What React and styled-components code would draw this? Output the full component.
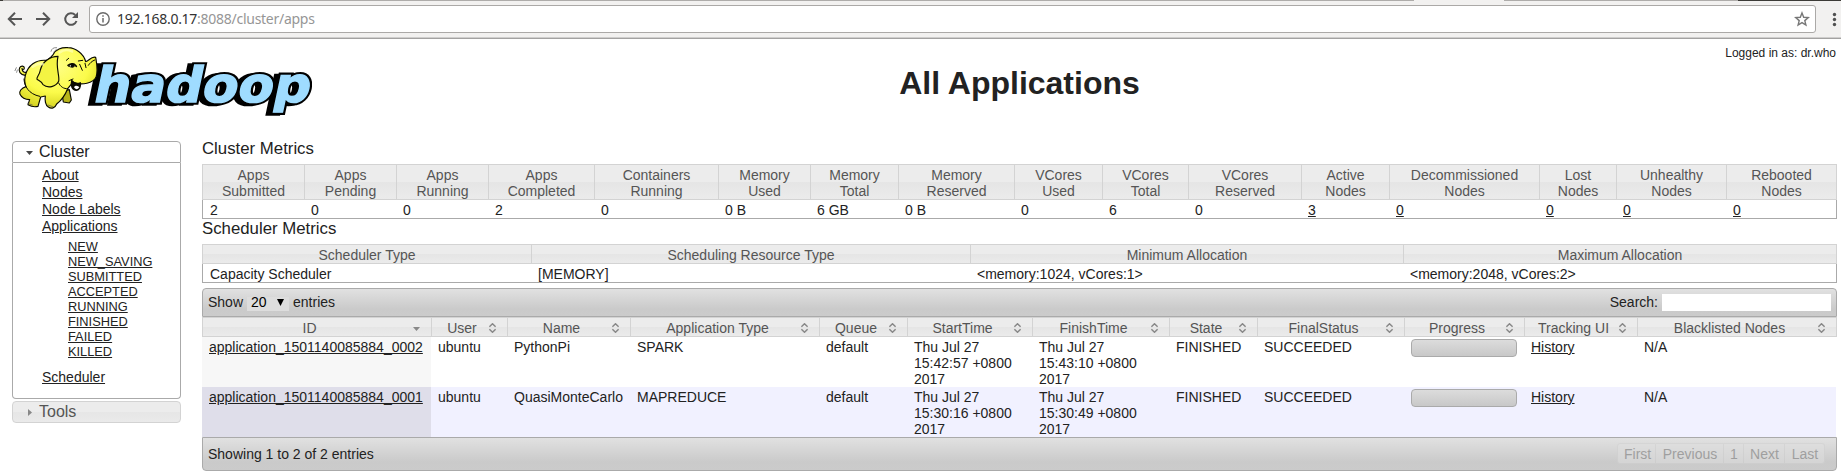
import React from 'react';
import styled, { createGlobalStyle } from 'styled-components';

const GlobalStyle = createGlobalStyle`
  html, body { margin: 0; padding: 0; background: #fff; }
  body {
    font-family: "Liberation Sans", Arial, sans-serif;
    font-size: 14px;
    line-height: 16px;
    color: #222;
    overflow: hidden;
  }
  * { box-sizing: border-box; }
`;

const Page = styled.div`
  width: 1841px;
  height: 475px;
  display: flex;
  flex-direction: column;
`;

/* Browser chrome */
const TabStrip = styled.div`
  display: flex;
  height: 1px;
  flex: none;
`;
const TabEdge = styled.div`
  width: ${(p) => p.$width}px;
  background: ${(p) => p.$tone};
`;
const Toolbar = styled.div`
  height: 38px;
  flex: none;
  display: flex;
  align-items: flex-start;
  padding: 4px 0 0 6px;
  background: #f2f1f0;
  border-bottom: 1px solid #a3a2a1;
  box-shadow: inset 0 -1px 0 #cfcecd;
`;
const NavIcons = styled.div`
  display: flex;
  width: 83px;
  padding-top: 4px;
  gap: 8px;
`;
const AddressBar = styled.div`
  display: flex;
  align-items: center;
  width: 1727px;
  height: 28px;
  padding: 0 5px 0 5px;
  background: #fff;
  border: 1px solid #aba9a7;
  border-radius: 3px;
`;
const Url = styled.div`
  flex: 1;
  margin-left: 6px;
  font-family: "Noto Sans", "Open Sans", sans-serif;
  font-size: 14px;
  letter-spacing: -0.27px;
  color: #333;
  white-space: nowrap;
  span { color: #969696; }
`;
const MenuIcon = styled.svg`
  margin: 6px 0 0 14px;
  flex: none;
`;

/* Page header */
const Header = styled.header`
  display: grid;
  grid-template-columns: 312px 1fr 114px;
  height: 101px;
  flex: none;
`;
const Logo = styled.svg`
  margin: 5px 0 0 12px;
  display: block;
`;
const Title = styled.h1`
  margin: 26px 0 0;
  font-size: 32px;
  line-height: 36px;
  font-weight: bold;
  text-align: center;
`;
const Login = styled.div`
  justify-self: end;
  padding: 7px 5px 0 0;
  font-size: 12px;
  line-height: 14px;
  white-space: nowrap;
`;

const Body = styled.div`
  display: flex;
  align-items: flex-start;
`;

/* Sidebar */
const Sidebar = styled.nav`
  width: 202px;
  flex: none;
  padding: 1px 21px 0 12px;
`;
const AccordionHeader = styled.div`
  display: flex;
  align-items: center;
  height: 22px;
  padding-left: 13px;
  font-size: 16px;
  line-height: 18px;
  color: ${(p) => (p.$open ? '#212121' : '#555')};
  background: ${(p) =>
    p.$open ? '#fff' : 'linear-gradient(#ececec 0, #ececec 50%, #e6e6e6 50%, #eaeaea 100%)'};
  border: 1px solid ${(p) => (p.$open ? '#aaa' : '#d3d3d3')};
  border-radius: ${(p) => (p.$open ? '4px 4px 0 0' : '4px')};
  margin-top: ${(p) => (p.$open ? 0 : 2)}px;
  svg { margin-right: 6px; }
`;
const AccordionBody = styled.div`
  height: 236px;
  padding: 4px 0 0 29px;
  border: 1px solid #aaa;
  border-top: 0;
  border-radius: 0 0 4px 4px;
`;
const MenuList = styled.ul`
  list-style: none;
  margin: 0;
  padding: 0;
  line-height: 17px;
`;
const StateList = styled.ul`
  list-style: none;
  margin: 4px 0 10px;
  padding: 0 0 0 26px;
  font-size: 12.8px;
  line-height: 15px;
`;
const Link = styled.a`
  color: #222;
  text-decoration: underline;
`;

/* Content */
const Main = styled.main`
  width: 1635px;
`;
const SectionTitle = styled.div`
  height: ${(p) => p.$height}px;
  padding-top: ${(p) => p.$offset}px;
  font-size: 16.8px;
  line-height: 18px;
`;
const Grid = styled.div`
  display: grid;
  grid-template-columns: ${(p) => p.$columns};
`;
const HeadGrid = styled(Grid)`
  border-right: 1px solid #d3d3d3;
`;
const HeadCell = styled.div`
  border: 1px solid #d3d3d3;
  border-right: 0;
  padding: 2px ${(p) => (p.$sortable ? 15 : 0)}px 0 0;
  color: #555;
  text-align: center;
  white-space: pre-line;
  background: linear-gradient(#ececec 0, #ececec 50%, #e5e5e5 50%, #ebebeb 100%);
  position: relative;
`;
const SortIcon = styled.svg`
  position: absolute;
  right: 10px;
  top: 5px;
`;
const MetricsRow = styled(Grid)`
  height: 19px;
  border: 1px solid #aaa;
  border-top: 0;
`;
const MetricsCell = styled.div`
  padding: 2px 0 0 7px;
  line-height: 16px;
`;

const AppsTable = styled.section`
  margin-top: 5px;
`;
const Bar = styled.div`
  display: flex;
  justify-content: space-between;
  height: ${(p) => p.$height}px;
  padding: ${(p) => p.$pad};
  border: 1px solid #aaa;
  border-radius: ${(p) => p.$radius};
  background: linear-gradient(#e1e1e1 0, #cacaca 75%, #cbcbcb 100%);
`;
const BarText = styled.div`
  display: flex;
  padding-top: ${(p) => p.$offset || 0}px;
  white-space: pre;
`;
const LengthSelect = styled.span`
  display: flex;
  align-items: flex-start;
  justify-content: space-between;
  width: 42px;
  height: 14px;
  margin: 3px 4px 0 4px;
  padding: 0 5px 0 4px;
  line-height: 10px;
  background: #ddd;
  color: #000;
  svg { margin-top: 2px; }
`;
const SearchInput = styled.input`
  width: 169px;
  height: 17px;
  margin: 0 0 0 4px;
  padding: 0;
  border: 0;
  background: #fff;
`;
const AppRow = styled(Grid)`
  height: 50px;
  padding-right: 1px;
  background: ${(p) => (p.$even ? '#f1f1ff' : '#fff')};
  background-clip: content-box;
`;
const AppCell = styled.div`
  padding: 2px 0 0 7px;
  white-space: pre-line;
  background: ${(p) => p.$tone || 'transparent'};
`;
const Progress = styled.div`
  width: 106px;
  height: 18px;
  border: 1px solid #aaa;
  border-radius: 4px;
  background: linear-gradient(#dcdcdc, #c8c8c8);
`;
const Pager = styled.div`
  display: flex;
  height: 21px;
  opacity: 0.5;
`;
const PageButton = styled.span`
  padding: 2px 5px 0 6px;
  border: 1px solid #d0d0d0;
  border-left-width: ${(p) => (p.$first ? 1 : 0)}px;
  background: #e0e0e0;
  color: #6e6e6e;
  width: ${(p) => p.$width}px;
  text-align: center;
  white-space: nowrap;
  border-radius: ${(p) => (p.$first ? '3px 0 0 3px' : p.$last ? '0 3px 3px 0' : 0)};
`;

const clusterMetrics = [
  ['Apps\nSubmitted', '2', 102],
  ['Apps\nPending', '0', 92],
  ['Apps\nRunning', '0', 92],
  ['Apps\nCompleted', '2', 106],
  ['Containers\nRunning', '0', 124],
  ['Memory\nUsed', '0 B', 92],
  ['Memory\nTotal', '6 GB', 88],
  ['Memory\nReserved', '0 B', 116],
  ['VCores\nUsed', '0', 88],
  ['VCores\nTotal', '6', 86],
  ['VCores\nReserved', '0', 113],
  ['Active\nNodes', '3', 88, true],
  ['Decommissioned\nNodes', '0', 150, true],
  ['Lost\nNodes', '0', 77, true],
  ['Unhealthy\nNodes', '0', 110, true],
  ['Rebooted\nNodes', '0', 111, true],
];

const schedulerMetrics = [
  ['Scheduler Type', 'Capacity Scheduler', 329],
  ['Scheduling Resource Type', '[MEMORY]', 439],
  ['Minimum Allocation', '<memory:1024, vCores:1>', 433],
  ['Maximum Allocation', '<memory:2048, vCores:2>', 434],
];

const appColumns = [
  ['ID', 229], ['User', 76], ['Name', 123], ['Application Type', 189], ['Queue', 88],
  ['StartTime', 125], ['FinishTime', 137], ['State', 88], ['FinalStatus', 147],
  ['Progress', 120], ['Tracking UI', 113], ['Blacklisted Nodes', 200],
];

const apps = [
  {
    id: 'application_1501140085884_0002', name: 'PythonPi', type: 'SPARK',
    start: 'Thu Jul 27\n15:42:57 +0800\n2017', finish: 'Thu Jul 27\n15:43:10 +0800\n2017',
  },
  {
    id: 'application_1501140085884_0001', name: 'QuasiMonteCarlo', type: 'MAPREDUCE',
    start: 'Thu Jul 27\n15:30:16 +0800\n2017', finish: 'Thu Jul 27\n15:30:49 +0800\n2017',
  },
];

const states = ['NEW', 'NEW_SAVING', 'SUBMITTED', 'ACCEPTED', 'RUNNING', 'FINISHED', 'FAILED', 'KILLED'];

/* The final column takes whatever width is left. */
const template = (widths) =>
  widths.map((w, i) => (i === widths.length - 1 ? 'minmax(0, 1fr)' : `${w}px`)).join(' ');

function MetricsTable({ metrics }) {
  const widths = metrics.map((m) => m[2]);
  /* The value row has its own left border, taken out of its first column. */
  const rowWidths = [widths[0] - 1, ...widths.slice(1)];
  return (
    <div>
      <HeadGrid $columns={template(widths)}>
        {metrics.map(([label]) => <HeadCell key={label}>{label}</HeadCell>)}
      </HeadGrid>
      <MetricsRow $columns={template(rowWidths)}>
        {metrics.map(([label, value, , linked]) => (
          <MetricsCell key={label}>{linked ? <Link>{value}</Link> : value}</MetricsCell>
        ))}
      </MetricsRow>
    </div>
  );
}

function HadoopLogo() {
  return (
    <Logo width="300" height="76" viewBox="36 132 900 228">
      <defs>
        <radialGradient id="skin" cx="0.45" cy="0.3" r="0.8">
          <stop offset="0" stopColor="#ffff8a" />
          <stop offset="0.55" stopColor="#fbfb4a" />
          <stop offset="1" stopColor="#c9c614" />
        </radialGradient>
      </defs>
      <g
        transform="translate(283 306) skewX(-12)"
        fontFamily="DejaVu Sans"
        fontWeight="bold"
        fontSize="146"
        strokeLinejoin="miter"
      >
        <text x="-22" y="3" textLength="650" lengthAdjust="spacingAndGlyphs" fill="#000" stroke="#000" strokeWidth="16">hadoop</text>
        <text x="-8" y="0" textLength="650" lengthAdjust="spacingAndGlyphs" fill="#000" stroke="#000" strokeWidth="17">hadoop</text>
        <text x="-8" y="0" textLength="650" lengthAdjust="spacingAndGlyphs" fill="#9fdcff" stroke="#9fdcff" strokeWidth="4">hadoop</text>
      </g>
      <g fill="url(#skin)" stroke="#0a0a00" strokeWidth="3.5" strokeLinejoin="round" strokeLinecap="round">
        <path d="M76 226C61 225 54 213 59 203C63 196 73 197 73 204C73 210 65 210 66 205C66 214 73 220 80 216" />
        <path d="M187 288L190 306L208 309L214 300L208 269L190 272Z" fill="#b8b51a" />
        <path d="M78 260C64 264 56 275 60 283C65 293 77 299 89 299L84 314C94 320 106 321 114 319L122 291L136 288C134 300 136 316 145 321C154 327 165 325 170 312C184 301 197 281 203 266L218 248C248 257 279 249 288 232C295 212 290 190 287 172C273 168 267 184 257 185C251 160 227 144 204 143C185 141 166 149 160 163C151 174 145 181 137 181C108 179 84 196 76 226C73 239 74 251 78 260Z" />
        <path d="M174 169C151 169 127 184 121 210C119 225 108 233 111 238C119 243 126 245 129 254C144 267 168 260 176 244C180 228 166 203 174 169Z" fill="#f4f443" />
        <path d="M215 241C211 257 216 271 229 271C238 270 244 260 241 248C231 253 222 249 215 241Z" fill="#0a0a00" />
        <path d="M222 261C227 254 235 257 238 262C232 270 226 269 222 261Z" fill="#fff" stroke="none" />
        <path d="M72 237C73 258 85 282 119 289M203 266C191 267 181 260 176 249M284 180C276 183 269 190 265 196M199 181L206 175M235 183L248 181M239 193L247 211M255 190L258 203M207 242L219 237" fill="none" strokeWidth="3" />
        <path d="M207 199C210 191 220 188 226 195C225 201 215 204 207 199Z" fill="#fff" strokeWidth="2.5" />
        <path d="M204 196C213 189 222 190 229 199" fill="none" strokeWidth="5" />
        <circle cx="217" cy="197" r="3.5" fill="#0a0a00" />
        <path d="M153 154C155 146 160 142 170 143M161 157C164 151 168 149 173 149M45 212L49 203M50 217L52 210M83 310L97 315M144 315L158 320" fill="none" stroke="#555" strokeWidth="2" />
        <path d="M179 157C190 149 205 149 216 154M98 200C111 191 122 190 129 193" fill="none" stroke="#ffffb8" strokeWidth="8" opacity="0.7" />
      </g>
    </Logo>
  );
}

function SortArrows({ active }) {
  return active ? (
    <SortIcon width="9" height="10" viewBox="0 0 9 10">
      <path d="M1 4H8L4.5 8Z" fill="#888" />
    </SortIcon>
  ) : (
    <SortIcon width="9" height="10" viewBox="0 0 9 10">
      <path d="M1.4 3.8L4.5 0.8L7.6 3.8M1.4 6.2L4.5 9.2L7.6 6.2" fill="none" stroke="#888" strokeWidth="1.5" />
    </SortIcon>
  );
}

function BrowserChrome() {
  return (
    <>
      <TabStrip>
        <TabEdge $width={3} $tone="#3c3b37" />
        <TabEdge $width={1411} $tone="#aeacaa" />
        <TabEdge $width={90} $tone="#f2f1f0" />
        <TabEdge $width={234} $tone="#aeacaa" />
        <TabEdge $width={103} $tone="#3c3b37" />
      </TabStrip>
      <Toolbar>
        <NavIcons>
          <svg width="20" height="20" viewBox="0 0 20 20" fill="none" stroke="#555" strokeWidth="2">
            <path d="M16 10H3.5M9 3.8L2.8 10L9 16.2" />
          </svg>
          <svg width="20" height="20" viewBox="0 0 20 20" fill="none" stroke="#555" strokeWidth="2">
            <path d="M2 10H14.5M9 3.8L15.2 10L9 16.2" />
          </svg>
          <svg width="20" height="20" viewBox="0 0 20 20">
            <path d="M14.5 12A5.8 5.8 0 1 1 13.2 6" fill="none" stroke="#555" strokeWidth="2" />
            <path d="M16 3V9H10Z" fill="#555" />
          </svg>
        </NavIcons>
        <AddressBar>
          <svg width="16" height="16" viewBox="0 0 16 16">
            <circle cx="8" cy="8" r="6.2" fill="none" stroke="#6b6b6b" strokeWidth="1.4" />
            <path d="M8 7V11.5M8 4.2V5.8" stroke="#6b6b6b" strokeWidth="1.5" />
          </svg>
          <Url>192.168.0.17<span>:8088/cluster/apps</span></Url>
          <svg width="16" height="16" viewBox="0 0 16 16">
            <path d="M8 2L9.7 6.3L14.3 6.6L10.8 9.6L11.9 14L8 11.6L4.1 14L5.2 9.6L1.7 6.6L6.3 6.3Z" fill="none" stroke="#777" strokeWidth="1.4" />
          </svg>
        </AddressBar>
        <MenuIcon width="8" height="16" viewBox="0 0 8 16" fill="#505050">
          <circle cx="4.5" cy="3.5" r="1.7" />
          <circle cx="4.5" cy="8.5" r="1.7" />
          <circle cx="4.5" cy="13.5" r="1.7" />
        </MenuIcon>
      </Toolbar>
    </>
  );
}

export default function App() {
  const appTemplate = template(appColumns.map((c) => c[1]));
  return (
    <Page>
      <GlobalStyle />
      <BrowserChrome />
      <Header>
        <HadoopLogo />
        <Title>All Applications</Title>
        <Login>Logged in as: dr.who</Login>
      </Header>
      <Body>
        <Sidebar>
          <AccordionHeader $open>
            <svg width="7" height="7" viewBox="0 0 7 7"><path d="M0 2H7L3.5 6Z" fill="#454545" /></svg>
            Cluster
          </AccordionHeader>
          <AccordionBody>
            <MenuList>
              <li><Link>About</Link></li>
              <li><Link>Nodes</Link></li>
              <li><Link>Node Labels</Link></li>
              <li>
                <Link>Applications</Link>
                <StateList>
                  {states.map((s) => <li key={s}><Link>{s}</Link></li>)}
                </StateList>
              </li>
              <li><Link>Scheduler</Link></li>
            </MenuList>
          </AccordionBody>
          <AccordionHeader>
            <svg width="7" height="7" viewBox="0 0 7 7"><path d="M2 0V7L6 3.5Z" fill="#888" /></svg>
            Tools
          </AccordionHeader>
        </Sidebar>
        <Main>
          <SectionTitle $height={24} $offset={0}>Cluster Metrics</SectionTitle>
          <MetricsTable metrics={clusterMetrics} />
          <SectionTitle $height={25} $offset={1}>Scheduler Metrics</SectionTitle>
          <MetricsTable metrics={schedulerMetrics} />
          <AppsTable>
            <Bar $height={29} $pad="5px 5px 0" $radius="4px 4px 0 0">
              <BarText>Show<LengthSelect>20
                <svg width="7" height="7" viewBox="0 0 7 7"><path d="M0 0H7L3.5 7Z" fill="#000" /></svg>
              </LengthSelect>entries</BarText>
              <BarText>Search:<SearchInput aria-label="Search" /></BarText>
            </Bar>
            <HeadGrid $columns={appTemplate}>
              {appColumns.map(([label], i) => (
                <HeadCell key={label} $sortable>
                  {label}
                  <SortArrows active={i === 0} />
                </HeadCell>
              ))}
            </HeadGrid>
            {apps.map((app, i) => (
              <AppRow key={app.id} $columns={appTemplate} $even={i === 1}>
                <AppCell $tone={i ? '#dfdeea' : '#f7f7f7'}><Link>{app.id}</Link></AppCell>
                <AppCell>ubuntu</AppCell>
                <AppCell>{app.name}</AppCell>
                <AppCell>{app.type}</AppCell>
                <AppCell>default</AppCell>
                <AppCell>{app.start}</AppCell>
                <AppCell>{app.finish}</AppCell>
                <AppCell>FINISHED</AppCell>
                <AppCell>SUCCEEDED</AppCell>
                <AppCell><Progress /></AppCell>
                <AppCell><Link>History</Link></AppCell>
                <AppCell>N/A</AppCell>
              </AppRow>
            ))}
            <Bar $height={34} $pad="5px 11px 0 5px" $radius="0 0 4px 4px">
              <BarText $offset={3}>Showing 1 to 2 of 2 entries</BarText>
              <Pager>
                <PageButton $first $width={39}>First</PageButton>
                <PageButton $width={68}>Previous</PageButton>
                <PageButton $width={20}>1</PageButton>
                <PageButton $width={41}>Next</PageButton>
                <PageButton $last $width={40}>Last</PageButton>
              </Pager>
            </Bar>
          </AppsTable>
        </Main>
      </Body>
    </Page>
  );
}
